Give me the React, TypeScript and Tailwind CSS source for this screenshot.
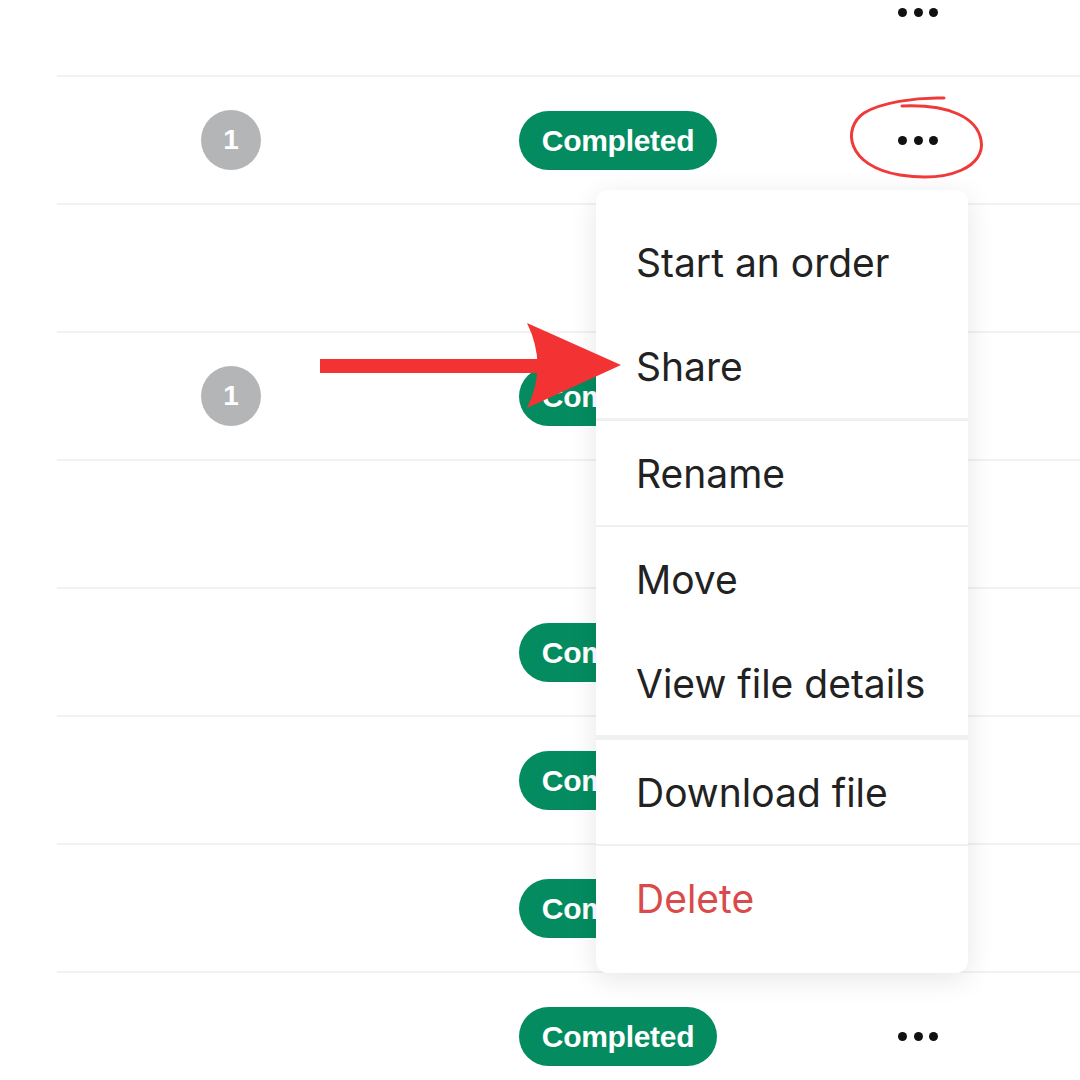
import React from "react";

type Row = { count?: boolean; badge?: boolean; dots?: boolean };

const rows: Row[] = [
  { dots: true },
  { count: true, badge: true, dots: true },
  {},
  { count: true, badge: true },
  {},
  { badge: true },
  { badge: true },
  { badge: true },
  { badge: true, dots: true },
];

function Dots() {
  return (
    <div className="flex w-[40px] items-center justify-between">
      <span className="h-[9px] w-[9px] rounded-full bg-[#111]" />
      <span className="h-[9px] w-[9px] rounded-full bg-[#111]" />
      <span className="h-[9px] w-[9px] rounded-full bg-[#111]" />
    </div>
  );
}

const menuFont = { fontFamily: "Inter, 'Noto Sans', sans-serif" };

function Item({ label, danger }: { label: string; danger?: boolean }) {
  return (
    <div
      className={`flex h-[104px] items-center pl-[40px] text-[39px] leading-none ${danger ? "text-[#d94a4a]" : "text-[#222]"}`}
      style={menuFont}
    >
      {label}
    </div>
  );
}

export default function App() {
  return (
    <div className="relative h-[1080px] w-[1080px] overflow-hidden bg-white">
      <div className="-mt-[51px] flex flex-col">
        {rows.map((r, i) => (
          <div
            key={i}
            className="ml-[57px] flex h-[128px] items-center border-b-2 border-[#f2f2f2]"
          >
            <div className="flex w-[462px] items-center pl-[144px]">
              {r.count && (
                <div
                  className="flex h-[60px] w-[60px] items-center justify-center rounded-full bg-[#b4b5b7] text-[28px] font-bold text-white"
                  style={{ fontFamily: "'Liberation Sans', Arial, sans-serif" }}
                >
                  1
                </div>
              )}
            </div>
            <div className="flex w-[379px] items-center">
              {r.badge && (
                <div
                  className="flex h-[59px] w-[198px] items-center justify-center rounded-full bg-[#048c60] text-[30px] font-bold tracking-[-0.3px] text-white"
                  style={{ fontFamily: "'Liberation Sans', Arial, sans-serif" }}
                >
                  Completed
                </div>
              )}
            </div>
            {r.dots && <Dots />}
          </div>
        ))}
      </div>

      {/* Dropdown menu */}
      <div className="absolute left-[596px] top-[190px] w-[372px] rounded-[12px] bg-white pb-[23px] pt-[20px] shadow-[0_6px_28px_rgba(0,0,0,0.10)]">
        <Item label="Start an order" />
        <Item label="Share" />
        <div className="h-[3px] bg-[#f0f0f0]" />
        <Item label="Rename" />
        <div className="h-[2px] bg-[#f0f0f0]" />
        <Item label="Move" />
        <Item label="View file details" />
        <div className="h-[5px] bg-[#f0f0f0]" />
        <Item label="Download file" />
        <div className="h-[2px] bg-[#f0f0f0]" />
        <Item label="Delete" danger />
      </div>

      {/* Annotations */}
      <svg
        className="pointer-events-none absolute left-0 top-0"
        width="1080"
        height="1080"
        viewBox="0 0 1080 1080"
      >
        <path
          d="M 944 98 C 915 97, 880 103, 864 113 C 842 128, 846 166, 900 175 C 950 183, 986 166, 981 140 C 977 118, 950 104, 902 106"
          fill="none"
          stroke="#f03a3a"
          strokeWidth="3"
          strokeLinecap="round"
        />
        <rect x="320" y="359" width="222" height="14" fill="#f33333" />
        <path d="M 527 323 L 621 365 L 527 408 Q 548 366 527 323 Z" fill="#f33333" />
      </svg>
    </div>
  );
}
